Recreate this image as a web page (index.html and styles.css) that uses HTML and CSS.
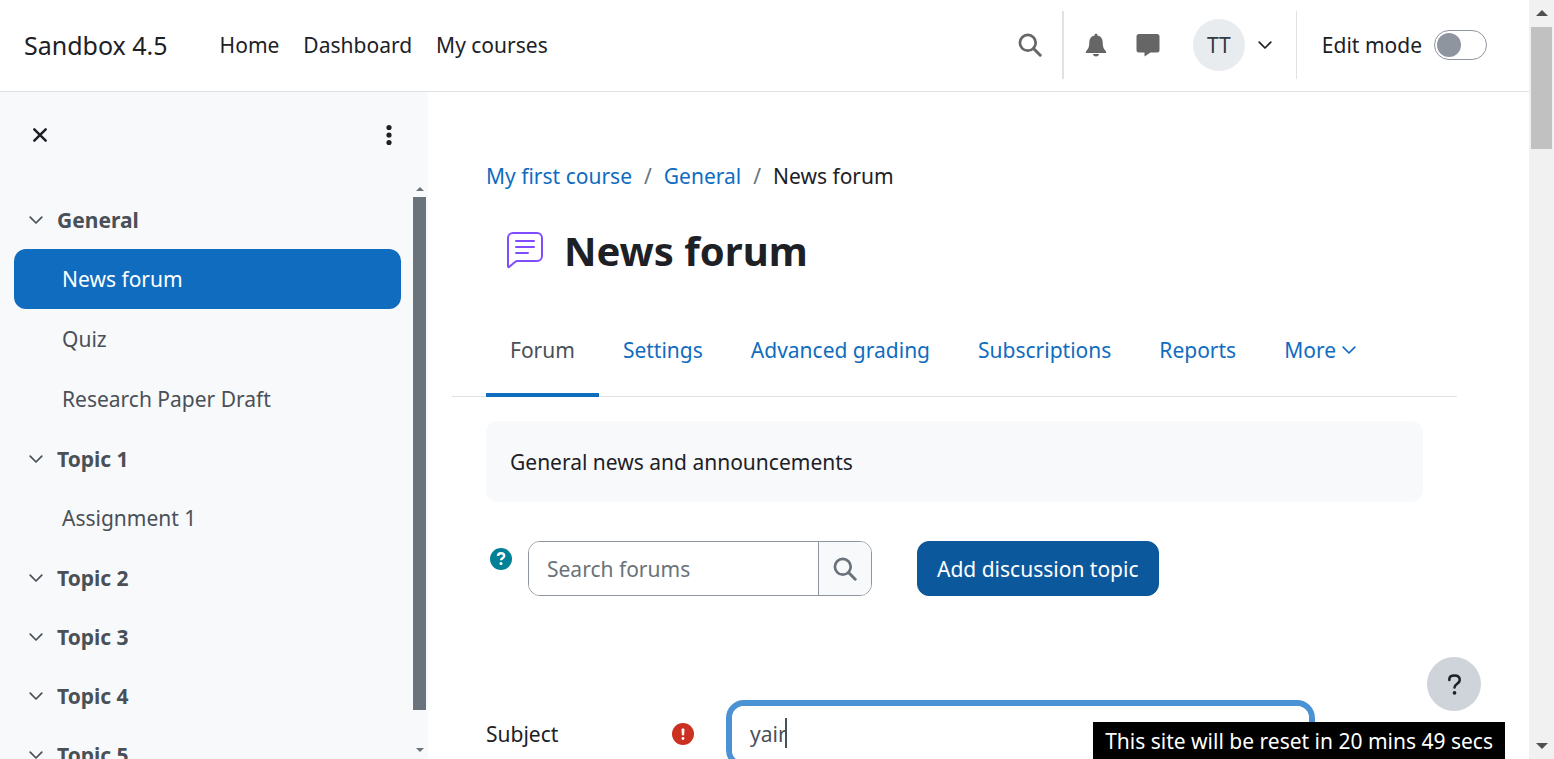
FILE: index.html
```html
<!DOCTYPE html>
<html lang="en">
<head>
<meta charset="utf-8">
<title>Sandbox 4.5: News forum</title>
<link rel="stylesheet" href="styles.css">
</head>
<body>
<svg class="sprite" aria-hidden="true">
  <symbol id="chevron" viewBox="0 0 14 14"><path d="M1.2 4.2 7 10 12.800 4.200" fill="none" stroke="currentColor" stroke-width="1.700" stroke-linecap="round" stroke-linejoin="round"/></symbol>
  <symbol id="search" viewBox="0 0 24 24"><circle cx="9.800" cy="9.800" r="7.900" fill="none" stroke="currentColor" stroke-width="2.700"/><path d="m15.500 15.500 6.700 6.700" stroke="currentColor" stroke-width="3" stroke-linecap="round"/></symbol>
</svg>
<div class="window">
  <div class="app">
    <header class="navbar">
      <a class="brand" href="#">Sandbox 4.5</a>
      <nav class="primary-nav" aria-label="Site">
        <a href="#">Home</a><a href="#">Dashboard</a><a href="#">My courses</a>
      </nav>
      <div class="user-nav">
        <button class="icon-button" aria-label="Search"><svg class="icon"><use href="#search"/></svg></button>
        <span class="divider divider-thick"></span>
        <button class="icon-button" aria-label="Notifications"><svg class="icon" viewBox="0 0 24 24"><path d="M12 .8c1 0 1.500.7 1.500 1.600 3.300.7 5.200 3.300 5.200 6.700 0 5.200 1.300 7.200 3.100 8.800.9.900.4 2.100-.8 2.100H3c-1.200 0-1.700-1.200-.8-2.100C4 16.300 5.300 14.300 5.300 9.100c0-3.400 1.900-6 5.200-6.700 0-.9.500-1.600 1.500-1.600zM9 21h6c0 1.600-1.300 2.500-3 2.500S9 22.600 9 21z" fill="currentColor"/></svg></button>
        <button class="icon-button" aria-label="Messages"><svg class="icon" viewBox="0 0 24 24"><path d="M3 1h18a2.500 2.500 0 0 1 2.500 2.500V17a2.500 2.500 0 0 1-2.500 2.500h-6.500L8.500 23.500v-4H3A2.500 2.500 0 0 1 .5 17V3.500A2.500 2.500 0 0 1 3 1z" fill="currentColor"/></svg></button>
        <button class="user-menu" aria-label="User menu"><span class="avatar">TT</span><svg class="chevron"><use href="#chevron"/></svg></button>
        <span class="divider"></span>
        <label class="edit-mode">Edit mode <input class="switch" type="checkbox" role="switch"></label>
      </div>
    </header>
    <div class="page">
      <aside class="drawer">
        <div class="drawer-header">
          <button class="drawer-button" aria-label="Close course index"><svg class="close" viewBox="0 0 16 16"><path d="M2.300 2.300 13.700 13.700M13.700 2.300 2.300 13.700" stroke="currentColor" stroke-width="2.500" stroke-linecap="round"/></svg></button>
          <button class="drawer-button" aria-label="Course index options"><svg class="dots" viewBox="0 0 6 22"><g fill="currentColor"><circle cx="3" cy="3.500" r="2.600"/><circle cx="3" cy="11" r="2.600"/><circle cx="3" cy="18.500" r="2.600"/></g></svg></button>
        </div>
        <div class="drawer-body">
          <nav class="course-index" aria-label="Course index">
            <a class="section" href="#"><svg class="chevron"><use href="#chevron"/></svg>General</a>
            <a class="activity active" href="#">News forum</a>
            <a class="activity" href="#">Quiz</a>
            <a class="activity" href="#">Research Paper Draft</a>
            <a class="section" href="#"><svg class="chevron"><use href="#chevron"/></svg>Topic 1</a>
            <a class="activity" href="#">Assignment 1</a>
            <a class="section" href="#"><svg class="chevron"><use href="#chevron"/></svg>Topic 2</a>
            <a class="section" href="#"><svg class="chevron"><use href="#chevron"/></svg>Topic 3</a>
            <a class="section" href="#"><svg class="chevron"><use href="#chevron"/></svg>Topic 4</a>
            <a class="section" href="#"><svg class="chevron"><use href="#chevron"/></svg>Topic 5</a>
          </nav>
          <div class="drawer-scrollbar" aria-hidden="true">
            <svg class="arrow-small" viewBox="0 0 8 4"><path d="M0 4 4 0l4 4z" fill="currentColor"/></svg>
            <span class="drawer-thumb"></span>
            <svg class="arrow-small" viewBox="0 0 8 4"><path d="M0 0h8L4 4z" fill="currentColor"/></svg>
          </div>
        </div>
      </aside>
      <main class="main">
        <div class="inset">
          <nav class="breadcrumb" aria-label="Breadcrumb">
            <a href="#">My first course</a><span class="slash">/</span><a href="#">General</a><span class="slash">/</span><span>News forum</span>
          </nav>
          <div class="heading">
            <svg class="forum-icon" viewBox="0 0 38 38"><g fill="none" stroke="currentColor" stroke-width="2" stroke-linecap="round" stroke-linejoin="round"><path d="M7 1h24a5 5 0 0 1 5 5v18a5 5 0 0 1-5 5H12a4 4 0 0 0-3 1l-6 5q-1 .5-1-1V6a5 5 0 0 1 5-5z"/><path d="M10 9h18M10 15h18M10 21h12"/></g></svg>
            <h1>News forum</h1>
          </div>
        </div>
        <nav class="tabs" aria-label="Forum">
          <a class="current" href="#">Forum</a><a href="#">Settings</a><a href="#">Advanced grading</a><a href="#">Subscriptions</a><a href="#">Reports</a><a class="more" href="#">More<svg class="chevron"><use href="#chevron"/></svg></a>
        </nav>
        <div class="inset">
          <p class="description">General news and announcements</p>
          <div class="actions">
            <button class="round-icon help" aria-label="Help with search"><svg viewBox="0 0 22 22"><circle cx="11" cy="11" r="11" fill="currentColor"/><path d="M8 8c0-1.700 1.200-2.700 3-2.700s3.200 1 3.200 2.600c0 2-3.100 2.100-3.100 4.300" fill="none" stroke="#fff" stroke-width="2.400"/><circle cx="11" cy="15.600" r="1.500" fill="#fff"/></svg></button>
            <form class="search-form">
              <input type="search" aria-label="Search forums" placeholder="Search forums">
              <button type="button" aria-label="Search forums"><svg class="icon"><use href="#search"/></svg></button>
            </form>
            <button class="primary">Add discussion topic</button>
          </div>
          <div class="field">
            <label for="subject">Subject</label>
            <svg class="round-icon required" viewBox="0 0 22 22" role="img" aria-label="Required"><circle cx="11" cy="11" r="11" fill="currentColor"/><path d="M10 6h2l-.3 6h-1.400z" fill="#fff" stroke="#fff" stroke-linejoin="round"/><circle cx="11" cy="15.500" r="1.400" fill="#fff"/></svg>
            <div class="subject-box"><input id="subject" type="text" value="yair"><span class="caret"></span></div>
          </div>
        </div>
      </main>
    </div>
  </div>
  <div class="page-scrollbar" aria-hidden="true">
    <svg class="arrow" viewBox="0 0 12 6"><path d="M0 6 6 0l6 6z" fill="currentColor"/></svg>
    <span class="page-thumb"></span>
    <svg class="arrow arrow-end" viewBox="0 0 12 6"><path d="M0 0h12L6 6z" fill="currentColor"/></svg>
  </div>
</div>
<button class="footer-help" aria-label="Show footer"><svg viewBox="0 0 16 24"><path d="M2.500 7.200V6.500C2.500 4 4.600 2.500 8 2.500s5.600 1.600 5.600 4.600c0 4.300-5.600 3.800-5.600 8.200" fill="none" stroke="currentColor" stroke-width="2.700" stroke-linecap="round"/><circle cx="8" cy="20.800" r="2" fill="currentColor"/></svg></button>
<div class="reset-notice" role="status">This site will be reset in 20 mins 49 secs</div>
</body>
</html>
```
FILE: styles.css
```css
* { box-sizing: border-box; }
body {
  margin: 0;
  overflow: hidden;
  background: #fff;
  color: #1d2125;
  font: 21px/36px "Noto Sans", "Open Sans", sans-serif;
}
a { color: #0f6cbf; text-decoration: none; }
button, input { font: inherit; color: inherit; margin: 0; }
button { padding: 0; border: 0; background: none; }
svg { display: block; flex: none; }
.sprite { position: absolute; width: 0; height: 0; }
.window { display: flex; height: 100vh; }
.app { flex: 1; min-width: 0; display: flex; flex-direction: column; }
.icon { width: 24px; height: 24px; }
.chevron { width: 14px; height: 14px; }

.navbar {
  flex: none;
  display: flex;
  align-items: center;
  height: 92px;
  padding: 0 42px 2px 24px;
  border-bottom: 1px solid #dee2e6;
}
.navbar a { color: #1d2125; }
.brand { font-size: 25px; }
.primary-nav { display: flex; gap: 24px; margin-left: 52px; }
.user-nav { display: flex; align-items: center; margin-left: auto; }
.icon-button { color: #666; margin-left: 28px; }
.icon-button:first-child { margin: 0; }
.divider { width: 1px; height: 68px; margin: 0 25px 0 24px; background: #dee2e6; }
.divider-thick { width: 2px; margin: 0 -8px 0 20px; }
.user-menu { display: flex; align-items: center; gap: 13px; margin-left: 33px; }
.avatar {
  width: 52px;
  height: 52px;
  border-radius: 50%;
  background: #e9ecef;
  color: #343a40;
  line-height: 52px;
}
.edit-mode { display: flex; align-items: center; gap: 12px; }
.switch {
  appearance: none;
  display: flex;
  align-items: center;
  width: 53px;
  height: 30px;
  padding: 0 2px;
  border: 1px solid #8f959e;
  border-radius: 15px;
}
.switch::before { content: ""; width: 24px; height: 24px; border-radius: 50%; background: #8f959e; }

.page { flex: 1; min-height: 0; display: flex; }
.drawer { flex: none; width: 428px; display: flex; flex-direction: column; background: #f8f9fb; }
.drawer-header { flex: none; display: flex; justify-content: space-between; align-items: center; height: 90px; padding: 0 36px 4px 32px; }
.close { width: 16px; height: 16px; }
.dots { width: 6px; height: 22px; }
.drawer-body { flex: 1; min-height: 0; display: flex; }
.course-index { flex: 1; overflow: hidden; padding: 8px 12px 0 14px; }
.course-index a { display: flex; align-items: center; color: #495057; }
.course-index .section { gap: 14px; height: 59px; padding-left: 15px; font-weight: 700; }
.course-index .activity { height: 60px; padding-left: 48px; border-radius: 12px; }
.course-index .active { background: #0f6cbf; color: #fff; }
.drawer-scrollbar { width: 15px; display: flex; flex-direction: column; color: #6a737b; padding: 5px 2px 7px 0; }
.arrow-small { width: 8px; height: 4px; margin: 0 auto; }
.drawer-thumb { flex: 1; margin: 6px 0 38px; background: #6a737b; }

.main { flex: 1; min-width: 0; overflow: hidden; padding: 66px 72px 0 24px; }
.inset { padding: 0 34px; }
.breadcrumb { display: flex; gap: 12px; }
.slash { color: #6a737b; }
.heading { display: flex; align-items: center; gap: 20px; margin-top: 26px; padding-left: 20px; }
.forum-icon { width: 38px; height: 38px; color: #7f4dff; }
h1 { margin: 0; font-size: 40px; line-height: 62px; }
.tabs { display: flex; height: 92px; margin-top: 23px; padding: 0 34px; border-bottom: 1px solid #dee2e6; }
.tabs a { height: 92px; padding: 27px 24px 0; border-bottom: 4px solid transparent; }
.tabs .current { color: #495057; border-color: #0f6cbf; }
.tabs .more { display: flex; gap: 6px; }
.more .chevron { margin-top: 11px; }
.description { margin: 24px 0 39px; padding: 23px 24px 22px; border-radius: 12px; background: #f8f9fb; }
.actions { display: flex; height: 55px; }
.round-icon { width: 22px; height: 22px; }
.help { margin: 7px 16px 0 4px; color: #008196; }
.search-form {
  display: flex;
  width: 344px;
  margin-right: 45px;
  border: 1px solid #8f959e;
  border-radius: 12px;
  overflow: hidden;
}
.search-form input { flex: 1; min-width: 0; padding: 0 18px; border: 0; }
.search-form input::placeholder { color: #6a737b; opacity: 1; }
.search-form button { width: 53px; padding-left: 14px; border-left: 1px solid #8f959e; background: #f8f9fb; color: #6a737b; }
.primary { padding: 0 19px; border: 1px solid #0c5699; border-radius: 12px; background: #0c589c; color: #fff; }
.field { display: flex; align-items: center; margin-top: 104px; }
.field label { width: 186px; }
.required { color: #ca3120; }
.subject-box {
  position: relative;
  width: 589px;
  margin-left: 32px;
  border: 6px solid #4b92d4;
  border-radius: 18px;
}
.subject-box input { display: block; width: 100%; height: 56px; padding: 0 18px; border: 0; border-radius: 12px; outline: 0; color: #495057; }
.caret { position: absolute; left: 53px; top: 12px; width: 2px; height: 30px; background: #495057; }

.page-scrollbar { flex: none; width: 25px; display: flex; flex-direction: column; padding: 10px 2px; background: #f1f1f1; color: #505050; }
.arrow { width: 12px; height: 6px; margin: 0 auto; }
.arrow-end { margin-top: auto; }
.page-thumb { height: 122px; margin-top: 11px; background: #c1c1c1; }
.footer-help {
  position: fixed;
  right: 73px;
  bottom: 48px;
  display: grid;
  place-items: center;
  width: 54px;
  height: 54px;
  border-radius: 50%;
  background: #ced4da;
}
.footer-help svg { width: 15px; height: 23px; }
.reset-notice { position: fixed; right: 49px; bottom: 0; padding: 1px 12px 0; background: #000; color: #fff; }
```
